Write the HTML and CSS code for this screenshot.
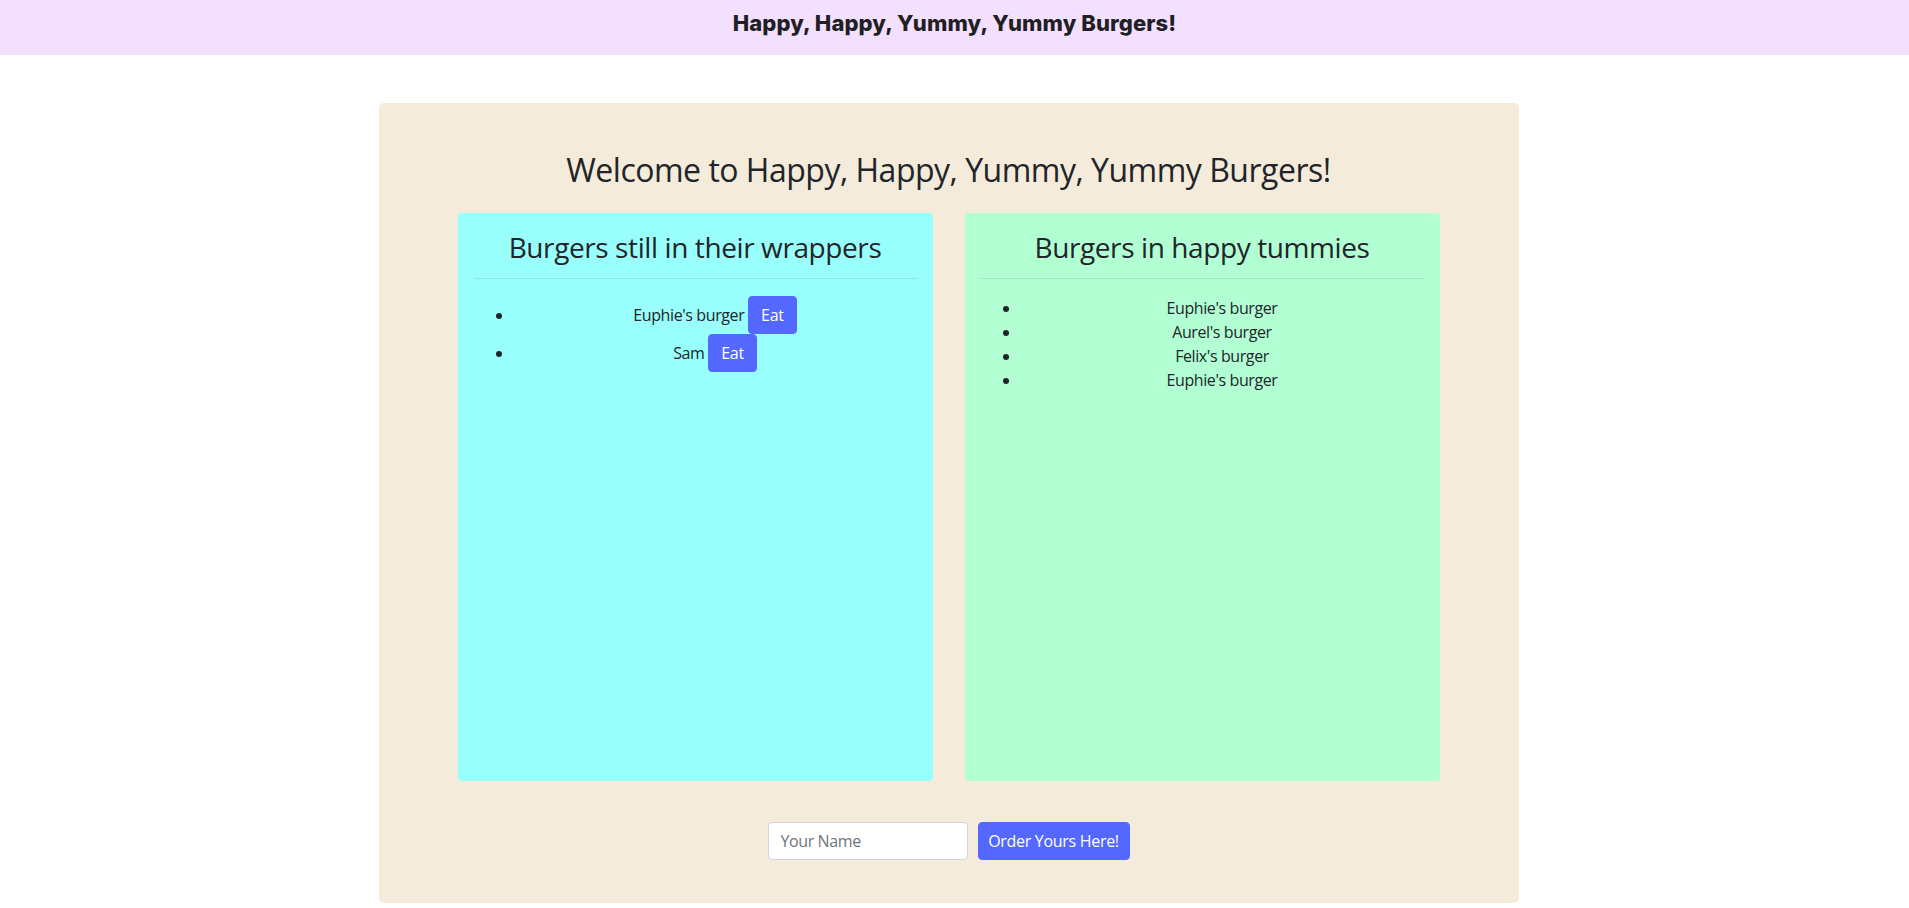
FILE: index.html
```html
<!DOCTYPE html>
<html lang="en">
<head>
<meta charset="utf-8">
<title>Happy, Happy, Yummy, Yummy Burgers!</title>
<link rel="stylesheet" href="styles.css">
</head>
<body>
<header class="topbar">
  <div class="brand">Happy, Happy, Yummy, Yummy Burgers!</div>
</header>
<main class="jumbotron">
  <h1 class="welcome">Welcome to Happy, Happy, Yummy, Yummy Burgers!</h1>
  <div class="columns">
    <section class="card card-wrapped">
      <h3 class="card-title">Burgers still in their wrappers</h3>
      <hr class="divider">
      <ul class="burger-list">
        <li>Euphie's burger <button class="btn">Eat</button></li>
        <li>Sam <button class="btn">Eat</button></li>
      </ul>
    </section>
    <section class="card card-eaten">
      <h3 class="card-title">Burgers in happy tummies</h3>
      <hr class="divider">
      <ul class="burger-list">
        <li>Euphie's burger</li>
        <li>Aurel's burger</li>
        <li>Felix's burger</li>
        <li>Euphie's burger</li>
      </ul>
    </section>
  </div>
  <form class="order-form">
    <input class="name-input" type="text" placeholder="Your Name">
    <button class="btn btn-order" type="button">Order Yours Here!</button>
  </form>
</main>
</body>
</html>
```
FILE: styles.css
```css
* { box-sizing: border-box; }
body {
  margin: 0;
  font-family: "Open Sans", "Noto Sans", sans-serif;
  font-size: 16px;
  line-height: 1.5;
  letter-spacing: -0.4px;
  color: #212529;
  background: #fff;
}
.topbar {
  height: 55px;
  background: #f3e0ff;
  display: flex;
  justify-content: center;
  padding-top: 8px;
}
.brand {
  font-family: Inter, "DejaVu Sans", sans-serif;
  font-weight: 800;
  font-size: 22px;
  line-height: 30px;
  letter-spacing: 0.1px;
  color: #1f1f24;
}
.jumbotron {
  width: 1140px;
  margin: 48px 0 0 calc(50% - 576px);
  padding: 48px 0 43px;
  background: #f5ebda;
  border-radius: 5px;
}
.welcome {
  margin: 0 0 24px;
  font-size: 32px;
  font-weight: 400;
  line-height: 38px;
  letter-spacing: -0.5px;
  text-align: center;
}
.columns {
  display: flex;
  justify-content: center;
  gap: 32px;
}
.card {
  width: 475px;
  height: 568px;
  border-radius: 4px;
  padding: 17px 16px;
}
.card-wrapped { background: #99fffc; }
.card-eaten { background: #b2ffd4; }
.card-title {
  margin: 0;
  font-size: 28px;
  font-weight: 400;
  line-height: 34px;
  letter-spacing: -0.4px;
  text-align: center;
}
.divider {
  margin: 14px 0 17px;
  border: 0;
  border-top: 1px solid rgba(0,0,0,0.1);
}
.burger-list {
  margin: 0;
  padding-left: 40px;
  text-align: center;
}
.btn {
  font-family: inherit;
  font-size: 16px;
  line-height: 24px;
  letter-spacing: -0.3px;
  padding: 6px 12px;
  border: 1px solid #5468ff;
  background: #5468ff;
  color: #fff;
  border-radius: 4px;
  cursor: pointer;
}
.order-form {
  margin-top: 41px;
  display: flex;
  justify-content: center;
  gap: 10px;
}
.name-input {
  width: 200px;
  height: 38px;
  padding: 6px 12px;
  font-family: inherit;
  font-size: 16px;
  letter-spacing: -0.4px;
  color: #495057;
  background: #fff;
  border: 1px solid #ced4da;
  border-radius: 4px;
}
.name-input::placeholder { color: #6c757d; }
.btn-order { width: 152px; height: 38px; padding: 6px 0; }
```
